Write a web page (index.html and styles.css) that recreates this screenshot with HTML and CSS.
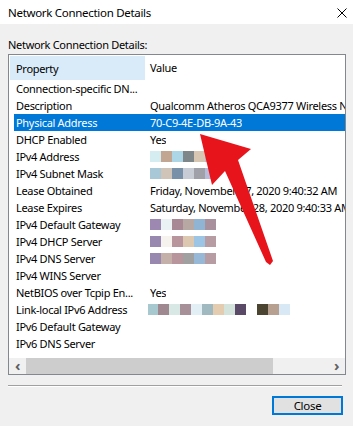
FILE: index.html
```html
<!DOCTYPE html>
<html lang="en">
<head>
  <meta charset="UTF-8" />
  <title>Network Connection Details</title>
  <link rel="stylesheet" href="styles.css">
</head>
<body>
  <div class="window">
    <div class="titlebar">
      <span>Network Connection Details</span>
      <svg class="close-x" width="10" height="10" viewBox="0 0 10 10">
        <path d="M0.5 0.5L9.5 9.5M9.5 0.5L0.5 9.5" stroke="#000" stroke-width="1" fill="none"/>
      </svg>
    </div>

    <div class="content">
      <div class="label">Network Connection Details:</div>

      <div class="listbox">
        <div class="list">
          <div class="row head">
            <div class="c1">Property</div>
            <div class="c2">Value</div>
          </div>
          <div class="row"><div class="c1">Connection-specific DN...</div><div class="c2"></div></div>
          <div class="row"><div class="c1">Description</div><div class="c2">Qualcomm Atheros QCA9377 Wireless Network Adapter</div></div>
          <div class="row selected"><div class="c1">Physical Address</div><div class="c2">70-C9-4E-DB-9A-43</div></div>
          <div class="row"><div class="c1">DHCP Enabled</div><div class="c2">Yes</div></div>
          <div class="row"><div class="c1">IPv4 Address</div>
            <div class="c2"><span class="blur">
              <i style="background:#d5ecf1"></i><i style="background:#c3a692"></i><i style="background:#acd6e6"></i><i style="background:#7f8689"></i><i style="background:#d9c6b2"></i><i style="background:#c0b8c8"></i>
            </span></div>
          </div>
          <div class="row"><div class="c1">IPv4 Subnet Mask</div>
            <div class="c2"><span class="blur">
              <i style="background:#a8c8d8"></i><i style="background:#d0c4b8"></i><i style="background:#7890a8"></i><i style="background:#c8ccd4"></i><i style="background:#a0a0a8"></i><i style="background:#b8bcd8"></i>
            </span></div>
          </div>
          <div class="row"><div class="c1">Lease Obtained</div><div class="c2">Friday, November 27, 2020 9:40:32 AM</div></div>
          <div class="row"><div class="c1">Lease Expires</div><div class="c2">Saturday, November 28, 2020 9:40:33 AM</div></div>
          <div class="row"><div class="c1">IPv4 Default Gateway</div>
            <div class="c2"><span class="blur">
              <i style="background:#9c88b0"></i><i style="background:#eaf2f4"></i><i style="background:#a88894"></i><i style="background:#b8a8a4"></i><i style="background:#90b4d4"></i><i style="background:#a8909c"></i>
            </span></div>
          </div>
          <div class="row"><div class="c1">IPv4 DHCP Server</div>
            <div class="c2"><span class="blur">
              <i style="background:#9888b0"></i><i style="background:#f6f2ee"></i><i style="background:#b8949c"></i><i style="background:#dcc8b0"></i><i style="background:#9cc4e4"></i><i style="background:#b89ca4"></i>
            </span></div>
          </div>
          <div class="row"><div class="c1">IPv4 DNS Server</div>
            <div class="c2"><span class="blur">
              <i style="background:#9888b0"></i><i style="background:#c4b0a8"></i><i style="background:#b8949c"></i><i style="background:#a0a0a0"></i><i style="background:#98b8d8"></i><i style="background:#b89ca4"></i>
            </span></div>
          </div>
          <div class="row"><div class="c1">IPv4 WINS Server</div><div class="c2"></div></div>
          <div class="row"><div class="c1">NetBIOS over Tcpip En...</div><div class="c2">Yes</div></div>
          <div class="row"><div class="c1">Link-local IPv6 Address</div>
            <div class="c2"><span class="blur wide">
              <i style="background:#a8c8d0"></i><i style="background:#a08890"></i><i style="background:#d8e8e4"></i><i style="background:#a89098"></i><i style="background:#e2eff5"></i><i style="background:#a0b8c0"></i><i style="background:#e4ccb0"></i><i style="background:#d4e4dc"></i><i style="background:#5a4a68"></i><i class="gap"></i><i style="background:#4a4430"></i><i style="background:#b8a090"></i><i style="background:#d8e8f4"></i>
            </span></div>
          </div>
          <div class="row"><div class="c1">IPv6 Default Gateway</div><div class="c2"></div></div>
          <div class="row"><div class="c1">IPv6 DNS Server</div><div class="c2"></div></div>
        </div>

        <div class="hscroll">
          <div class="arrow-btn">&lsaquo;</div>
          <div class="track"><div class="thumb"></div></div>
          <div class="arrow-btn">&rsaquo;</div>
        </div>
      </div>

      <div class="separator"></div>

      <div class="actions">
        <button class="button">Close</button>
      </div>
    </div>

    <svg class="callout" width="353" height="426" viewBox="0 0 353 426">
      <polygon points="200,134 251,149 238,160 273,261 270,265 266,262 225,171 212,185" fill="#e8141c"/>
    </svg>
  </div>
</body>
</html>
```

FILE: styles.css
```css
body {
  margin: 0;
  padding: 0;
  font-family: 'Noto Sans', sans-serif;
  font-size: 11px;
  letter-spacing: -0.3px;
  color: #000;
  background: #f0f0f0;
}
.window {
  position: relative;
  width: 353px;
  height: 426px;
  background: #f0f0f0;
  overflow: hidden;
}
.titlebar {
  height: 24px;
  background: #fff;
  display: flex;
  align-items: center;
  justify-content: space-between;
  padding: 0 6px 0 8px;
  font-size: 11.5px;
}
.close-x {
  margin-top: 1px;
}
.content {
  padding: 0 7px 0 8px;
}
.label {
  padding-top: 13px;
  height: 15px;
  line-height: 15px;
}
.listbox {
  margin-top: 2px;
  border: 1px solid #828790;
  background: #fff;
  height: 319px;
  display: flex;
  flex-direction: column;
}
.list {
  flex: 1;
  overflow: hidden;
}
.row {
  display: flex;
  height: 17px;
  line-height: 17px;
  margin-left: 5px;
  white-space: nowrap;
}
.row .c1 {
  width: 132px;
  padding-left: 2px;
  flex-shrink: 0;
  overflow: hidden;
}
.row .c2 {
  padding-left: 2px;
  overflow: hidden;
  display: flex;
  align-items: center;
}
.row.head {
  height: 25px;
  line-height: 25px;
  margin-left: 0;
}
.row.head .c1 {
  margin-left: 1px;
  margin-top: 1px;
  width: 129px;
  padding-left: 6px;
  background: #d9ebf9;
}
.row.head .c2 {
  padding-left: 5px;
}
.row.selected {
  background: #0078d7;
  color: #fff;
}
.blur {
  display: flex;
}
.blur i {
  display: block;
  width: 11px;
  height: 11px;
}
.blur i.gap {
  background: transparent;
}
.blur.wide {
  margin-left: -3px;
}
.hscroll {
  height: 16px;
  display: flex;
  background: #f0f0f0;
}
.arrow-btn {
  width: 17px;
  text-align: center;
  line-height: 15px;
  font-size: 15px;
  font-weight: bold;
  color: #606060;
}
.track {
  flex: 1;
  display: flex;
}
.thumb {
  width: 247px;
  background: #cdcdcd;
}
.separator {
  margin-top: 10px;
  margin-right: 4px;
  border-top: 1px solid #a0a0a0;
  border-bottom: 1px solid #fff;
}
.actions {
  display: flex;
  justify-content: flex-end;
  padding-top: 9px;
  padding-right: 3px;
}
.button {
  width: 71px;
  height: 19px;
  padding: 0;
  background: #e1e1e1;
  border: 2px solid #0078d7;
  font-family: inherit;
  font-size: 11.5px;
  letter-spacing: inherit;
  color: #000;
}
.callout {
  position: absolute;
  left: 0;
  top: 0;
  pointer-events: none;
}
```
